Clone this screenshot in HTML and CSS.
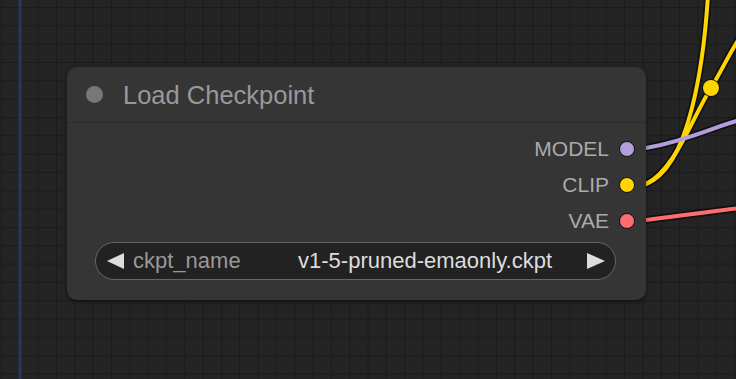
FILE: index.html
```html
<!DOCTYPE html>
<html>
<head>
    <title>Load Checkpoint</title>
    <link rel="stylesheet" href="styles.css">
</head>
<body>
    <div class="canvas">
        <!-- Links between nodes -->
        <svg class="links" width="736" height="379" viewBox="0 0 736 379">
            <line x1="20" y1="0" x2="20" y2="379" stroke="#25375b" stroke-width="3"/>
            <g fill="none" stroke="#111" stroke-width="7.5" stroke-linecap="round">
                <path d="M646,148 C690,140 710,128 740,120"/>
                <path d="M646,220 C690,214 710,212 740,208"/>
                <path d="M646,184 C690,168 704,60 708,-5"/>
                <path d="M646,184 C675,170 692,118 711,88 C722,70 730,52 742,34"/>
            </g>
            <g fill="none" stroke-width="4" stroke-linecap="round">
                <path d="M646,184 C690,168 704,60 708,-5" stroke="#ffd500"/>
                <path d="M646,184 C675,170 692,118 711,88 C722,70 730,52 742,34" stroke="#ffd500"/>
                <path d="M646,148 C690,140 710,128 740,120" stroke="#b39ddb"/>
                <path d="M646,220 C690,214 710,212 740,208" stroke="#ff6e6e"/>
            </g>
            <circle cx="711" cy="88" r="9" fill="#111"/>
            <circle cx="711" cy="88" r="8" fill="#ffd500"/>
        </svg>

        <!-- Node -->
        <div class="node">
            <div class="node-title">
                <span class="title-dot"></span>
                <span class="title-text">Load Checkpoint</span>
            </div>
            <div class="node-body">
                <div class="outputs">
                    <div class="slot"><span>MODEL</span><i class="dot model"></i></div>
                    <div class="slot"><span>CLIP</span><i class="dot clip"></i></div>
                    <div class="slot"><span>VAE</span><i class="dot vae"></i></div>
                </div>
                <div class="widget">
                    <span class="arrow left"></span>
                    <span class="widget-label">ckpt_name</span>
                    <span class="widget-value">v1-5-pruned-emaonly.ckpt</span>
                    <span class="arrow right"></span>
                </div>
            </div>
        </div>
    </div>
</body>
</html>
```

FILE: styles.css
```css
body { margin: 0; background: #222; font-family: "Liberation Sans", Arial, sans-serif; overflow: hidden; }
.canvas {
    position: relative;
    width: 736px;
    height: 379px;
    background-color: #242424;
    background-image:
        linear-gradient(to right, #1b1b1b 1px, transparent 1px),
        linear-gradient(to bottom, #1b1b1b 1px, transparent 1px);
    background-size: 18.33px 18.33px;
    background-position: 1px 7px;
}
.links { position: absolute; left: 0; top: 0; }

.node {
    position: absolute;
    left: 67px;
    top: 67px;
    width: 579px;
    height: 233px;
    background: #353535;
    border-radius: 10px;
    box-shadow: 0 2px 4px rgba(0, 0, 0, 0.45);
    display: flex;
    flex-direction: column;
}
.node-title {
    height: 55px;
    display: flex;
    align-items: center;
    border-bottom: 1px solid #2b2b2b;
    padding-left: 19px;
}
.title-dot { width: 17px; height: 17px; border-radius: 50%; background: #777; }
.title-text { margin-left: 20px; font-size: 25.5px; color: #999; margin-top: 1px; }

.node-body { padding: 8px 11px 0 28px; }
.outputs { display: flex; flex-direction: column; align-items: flex-end; }
.slot { height: 36px; display: flex; align-items: center; font-size: 21px; color: #aaa; }
.dot {
    width: 14px;
    height: 14px;
    border-radius: 50%;
    border: 1.5px solid #111;
    margin-left: 10px;
}
.dot.model { background: #b39ddb; }
.dot.clip { background: #ffd500; }
.dot.vae { background: #ff6e6e; }

.widget {
    margin-top: 3px;
    margin-right: 19px;
    height: 38px;
    box-sizing: border-box;
    border: 1.5px solid #666;
    border-radius: 19px;
    background: #222;
    display: flex;
    align-items: center;
    padding: 0 10px 0 11px;
    font-size: 22px;
}
.arrow { width: 0; height: 0; border-top: 8px solid transparent; border-bottom: 8px solid transparent; }
.arrow.left { border-right: 17px solid #ddd; }
.arrow.right { border-left: 18px solid #ddd; }
.widget-label { color: #999; margin-left: 9px; flex: 1; }
.widget-value { color: #ddd; margin-right: 35px; }
```
